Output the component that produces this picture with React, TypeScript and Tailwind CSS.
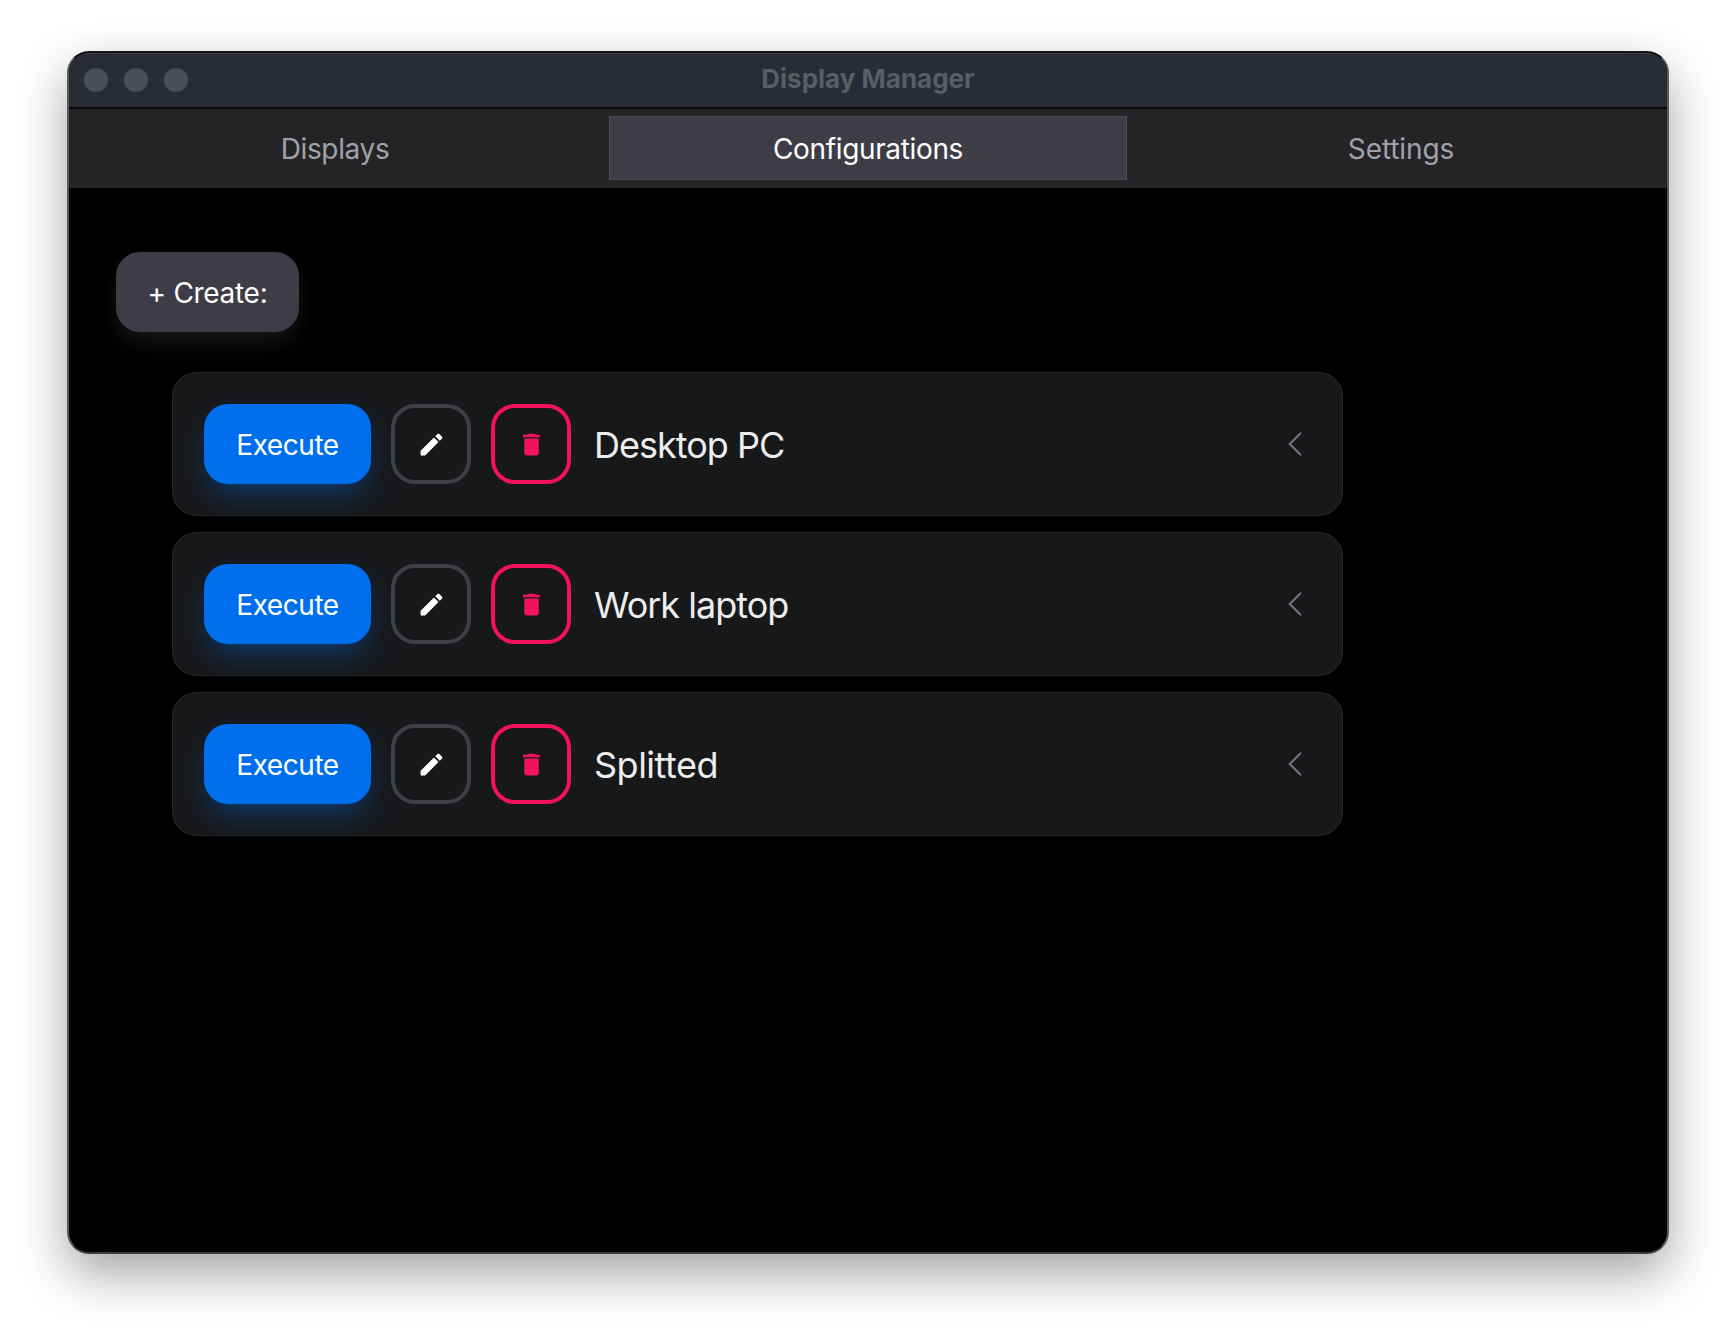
function Row({ name, tracking }: { name: string; tracking: string }) {
  return (
    <div className="flex h-[144px] items-center rounded-[24px] border border-[#26272a] bg-[#17181a] pl-[31px] pr-[29px]">
      <button className="flex h-[80px] w-[167px] items-center justify-center rounded-[24px] bg-[#006fee] pt-px text-[28px] leading-none tracking-[-0.45px] text-white shadow-[0_14px_30px_-6px_rgba(0,111,238,0.42)]">
        Execute
      </button>
      <button className="ml-[20px] flex h-[80px] w-[80px] items-center justify-center rounded-[24px] border-[4px] border-[#3f3f46]">
        <svg viewBox="0 0 24 24" className="h-[29px] w-[29px]" fill="#ffffff">
          <path d="M3 17.25V21h3.75L17.81 9.94l-3.75-3.75L3 17.25zM20.71 7.04a1 1 0 0 0 0-1.41l-2.34-2.34a1 1 0 0 0-1.41 0l-1.83 1.83 3.75 3.75 1.83-1.83z" />
        </svg>
      </button>
      <button className="ml-[20px] flex h-[80px] w-[80px] items-center justify-center rounded-[24px] border-[4px] border-[#f31260]">
        <svg viewBox="0 0 24 24" className="h-[29px] w-[29px]" fill="#f31260">
          <path d="M6 19c0 1.1.9 2 2 2h8c1.1 0 2-.9 2-2V7H6v12zM19 4h-3.5l-1-1h-5l-1 1H5v2h14V4z" />
        </svg>
      </button>
      <span className={`ml-[23px] flex-1 pt-px text-[36px] leading-none text-[#ecedee] ${tracking}`}>{name}</span>
      <svg viewBox="0 0 24 24" className="h-[36px] w-[36px]" fill="none" stroke="#71717a" strokeWidth="1.5" strokeLinecap="round" strokeLinejoin="round">
        <path d="M15.5 19l-7-7 7-7" />
      </svg>
    </div>
  );
}

export default function App() {
  return (
    <div className="h-[1336px] w-[1736px] overflow-hidden bg-white pl-[67px] pt-[51px] font-['Inter',sans-serif]">
      <div className="h-[1203px] w-[1602px] overflow-hidden rounded-[22px] border-x-2 border-b-2 border-t-2 border-x-[#58585a] border-b-[#3c3c3e] border-t-[#141416] bg-black shadow-[0_20px_50px_rgba(0,0,0,0.36)]">
        <div className="relative flex h-[56px] items-center border-b-2 border-t border-b-[#0c0c0e] border-t-[#3c4048] bg-[#282c34] pb-[2px] pl-[15px]">
          <div className="flex gap-[16px]">
            <span className="h-[24px] w-[24px] rounded-full bg-[#4b4e54]" />
            <span className="h-[24px] w-[24px] rounded-full bg-[#4b4e54]" />
            <span className="h-[24px] w-[24px] rounded-full bg-[#4b4e54]" />
          </div>
          <span className="absolute inset-x-0 -translate-y-px text-center text-[26px] font-bold leading-none text-[#5a5d63]">Display Manager</span>
        </div>
        <div className="grid h-[79px] grid-cols-[1fr_518px_1fr] gap-[8px] bg-[#242426] pb-[8px] pt-[7px] text-[28px] tracking-[-0.35px]">
          <div className="flex items-center justify-center pt-[1px] text-[#a1a1aa]">Displays</div>
          <div className="flex items-center justify-center border border-[#4c4c54] bg-[#3e3d47] pt-[1px] text-white">Configurations</div>
          <div className="flex items-center justify-center pt-[1px] tracking-[-0.1px] text-[#a1a1aa]">Settings</div>
        </div>
        <div className="pl-[47px] pt-[64px]">
          <button className="flex h-[80px] w-[183px] items-center justify-center rounded-[24px] bg-[#3e3d47] pt-px text-[28px] leading-none tracking-[-0.3px] text-white shadow-[0_12px_24px_-4px_rgba(63,63,70,0.4)]">
            + Create:
          </button>
          <div className="ml-[56px] mt-[40px] flex w-[1171px] flex-col gap-[16px]">
            <Row name="Desktop PC" tracking="tracking-[-1px]" />
            <Row name="Work laptop" tracking="tracking-[-1px]" />
            <Row name="Splitted" tracking="tracking-[-0.5px]" />
          </div>
        </div>
      </div>
    </div>
  );
}
